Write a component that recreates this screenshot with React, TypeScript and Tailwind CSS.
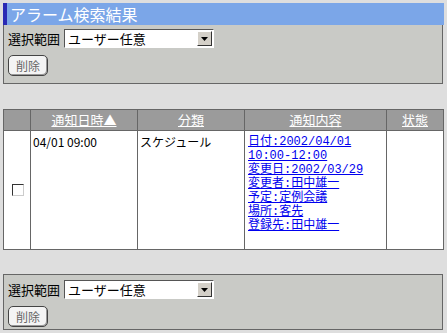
import React from "react";

const font = { fontFamily: '"Noto Sans CJK JP", "DejaVu Sans", sans-serif' };
const mono = { fontFamily: '"Liberation Mono", "Noto Sans CJK JP", monospace' };

const SelectBox = () => (
  <div className="flex items-center h-[19px] w-[150px] bg-white border border-t-[#555] border-l-[#555] border-b-white border-r-white">
    <span className="flex-1 pl-[3px] text-[13px] leading-none text-black">ユーザー任意</span>
    <div className="w-[15px] h-[15px] mr-[1px] bg-[#d4d0c8] border border-t-white border-l-white border-b-[#333] border-r-[#333] flex items-center justify-center">
      <svg width="7" height="4" viewBox="0 0 7 4">
        <path d="M0 0 H7 L3.5 4 Z" fill="#000" />
      </svg>
    </div>
  </div>
);

const DeleteButton = () => (
  <button className="w-[40px] h-[21px] rounded-[5px] border border-[#444] bg-[#f4f4f4] shadow-[inset_-1px_-1px_0_#999] text-[12px] leading-none text-[#666]">
    削除
  </button>
);

const Controls = () => (
  <div className="flex flex-col gap-[7px] pl-[4px]">
    <div className="flex items-center gap-[4px]">
      <span className="text-[13px] leading-none text-black">選択範囲</span>
      <SelectBox />
    </div>
    <DeleteButton />
  </div>
);

const lines = [
  "日付:2002/04/01",
  "10:00-12:00",
  "変更日:2002/03/29",
  "変更者:田中雄一",
  "予定:定例会議",
  "場所:客先",
  "登録先:田中雄一",
];

export default function App() {
  return (
    <div className="w-[447px] h-[333px] bg-[#dedede] pt-[3px] px-[3px]" style={font}>
      {/* title */}
      <div className="flex h-[22px] w-[441px] bg-[#7ba6e8]">
        <div className="w-[4px] bg-[#2a2ab4]" />
        <span className="pl-[3px] text-[16px] leading-[22px] text-white">アラーム検索結果</span>
      </div>
      <div className="w-[440px] h-[59px] bg-[#c9cac6] border border-t-0 border-[#666] pt-[4px]">
        <Controls />
      </div>

      {/* table */}
      <table className="mt-[25px] w-[440px] border-collapse table-fixed">
        <colgroup>
          <col className="w-[27px]" />
          <col className="w-[107px]" />
          <col className="w-[107px]" />
          <col className="w-[142px]" />
          <col className="w-[57px]" />
        </colgroup>
        <thead>
          <tr className="h-[21px] bg-[#9b9b9b] text-[13px] text-white">
            <th className="border border-[#666] font-normal"></th>
            <th className="border border-[#666] font-normal"><span className="underline">通知日時▲</span></th>
            <th className="border border-[#666] font-normal"><span className="underline">分類</span></th>
            <th className="border border-[#666] font-normal"><span className="underline">通知内容</span></th>
            <th className="border border-[#666] font-normal"><span className="underline">状態</span></th>
          </tr>
        </thead>
        <tbody>
          <tr className="h-[119px] bg-white text-[12px] text-black">
            <td className="border border-[#666] align-middle">
              <div className="ml-[8px] w-[12px] h-[12px] border border-t-[#333] border-l-[#333] border-b-[#ccc] border-r-[#ccc] bg-white" />
            </td>
            <td className="border border-[#666] align-top pt-[4px] pl-[2px] leading-[14px]">04/01 09:00</td>
            <td className="border border-[#666] align-top pt-[4px] pl-[2px] leading-[14px]">スケジュール</td>
            <td className="border border-[#666] align-top pt-[4px] pl-[3px] leading-[14px]" style={mono}>
              {lines.map((l) => (
                <div key={l} className="h-[14px]">
                  <a className="text-[#0000ee] underline">{l}</a>
                </div>
              ))}
            </td>
            <td className="border border-[#666]"></td>
          </tr>
        </tbody>
      </table>

      <div className="mt-[24px] w-[440px] h-[56px] bg-[#c9cac6] border border-[#666] pt-[5px]">
        <Controls />
      </div>
    </div>
  );
}
